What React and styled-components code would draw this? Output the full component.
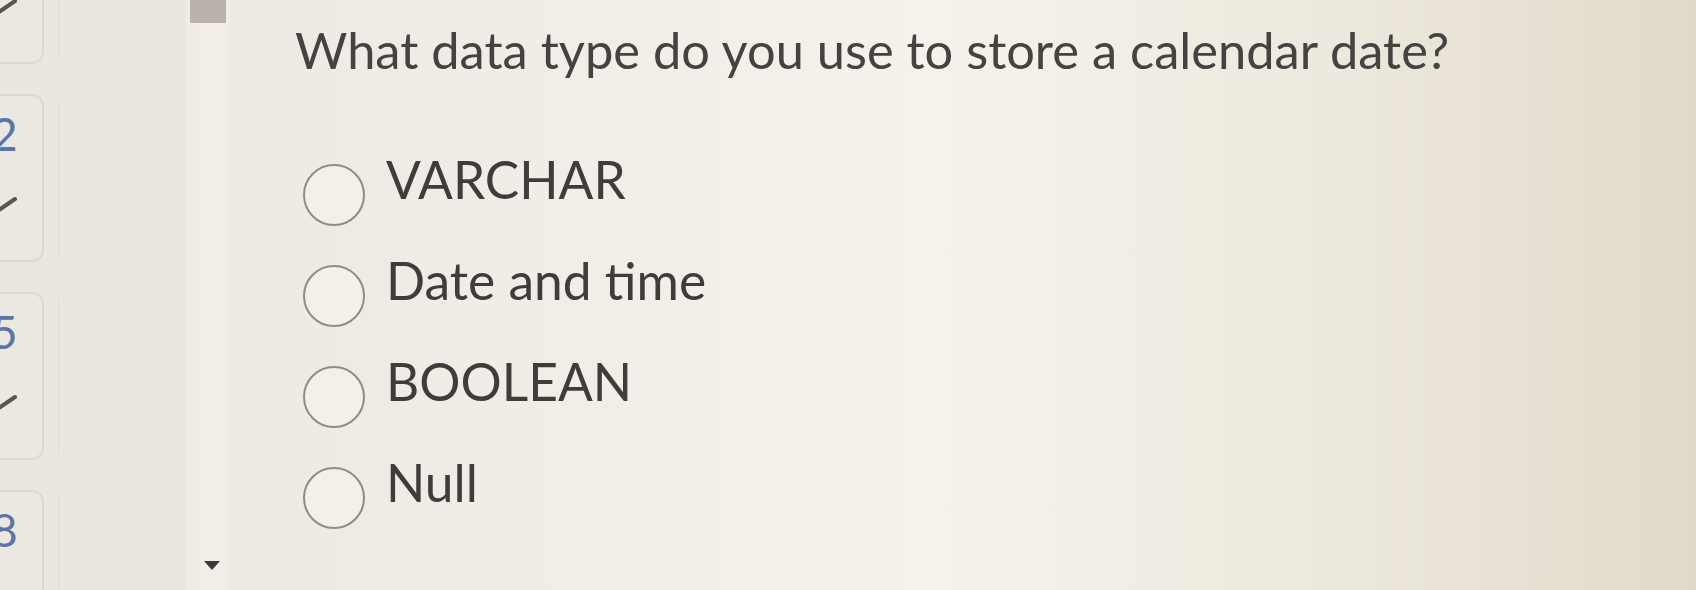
import React from "react"
import styled, { createGlobalStyle } from "styled-components"

const GlobalStyle = createGlobalStyle`
  html, body {
    margin: 0;
    padding: 0;
    height: 100%;
    overflow: hidden;
  }
  body {
    font-family: Lato, "Liberation Sans", sans-serif;
    background: #efebe4;
  }
`

const questions = [
  { id: 1, num: "1" },
  { id: 2, num: "2" },
  { id: 3, num: "5" },
  { id: 4, num: "8" },
]

const answers = ["VARCHAR", "Date and time", "BOOLEAN", "Null"]

const Check = () => (
  <svg width="20" height="20" viewBox="0 0 20 20">
    <path d="M-4 19 L15 6" stroke="#595552" strokeWidth="4" strokeLinecap="round" fill="none" />
  </svg>
)

export default function App() {
  return (
    <>
      <GlobalStyle />
      <Page>
        <Sidebar>
          {questions.map((q) => (
            <Card key={q.id}>
              <Num $hidden={q.id === 1}>{q.num}</Num>
              <Mark>
                <Check />
              </Mark>
            </Card>
          ))}
        </Sidebar>
        <Track>
          <Thumb />
          <Arrow />
        </Track>
        <Main>
          <Question>What data type do you use to store a calendar date?</Question>
          <Options>
            {answers.map((a) => (
              <Option key={a}>
                <Radio />
                <Label>{a}</Label>
              </Option>
            ))}
          </Options>
        </Main>
      </Page>
    </>
  )
}

const Page = styled.div`
  display: grid;
  grid-template-columns: 186px 44px 1fr;
  grid-template-rows: 590px;
  height: 590px;
  overflow: hidden;
  background: linear-gradient(
    90deg,
    #ebe8e1 0%,
    #f1ede6 30%,
    #f6f2eb 55%,
    #eee9de 78%,
    #e0dacb 100%
  );
`

const Sidebar = styled.div`
  display: flex;
  flex-direction: column;
  gap: 30px;
  overflow: hidden;
  background: #eae7e0;

  & > :first-child {
    margin-top: -104px;
  }
`

const Card = styled.div`
  position: relative;
  width: 44px;
  height: 168px;
  flex-shrink: 0;
  box-sizing: border-box;
  border: 2px solid #dcd8d0;
  border-left: none;
  border-radius: 0 12px 12px 0;
  background: #ebe8e1;

  &::after {
    content: "";
    position: absolute;
    top: 4px;
    bottom: 4px;
    right: -17px;
    width: 1px;
    background: #e0ddd6;
  }
`

const Num = styled.div`
  visibility: ${(p) => (p.$hidden ? "hidden" : "visible")};
  margin-top: 15px;
  margin-left: -9px;
  font-size: 46px;
  line-height: 46px;
  color: #5d74a8;
`

const Mark = styled.div`
  margin-top: 36px;
  height: 20px;
`

const Track = styled.div`
  display: flex;
  flex-direction: column;
  align-items: center;
  justify-content: space-between;
  background: linear-gradient(90deg, #f0ebe5 0%, #f4eee8 50%, #f1ece5 100%);
  padding-bottom: 20px;
`

const Thumb = styled.div`
  width: 36px;
  height: 23px;
  background: #b9b2ad;
`

const Arrow = styled.div`
  width: 0;
  height: 0;
  border-left: 8px solid transparent;
  border-right: 8px solid transparent;
  border-top: 9px solid #3e3a3a;
  margin-left: 8px;
`

const Main = styled.div`
  padding-top: 20px;
  padding-left: 65px;
  color: #454341;
`

const Question = styled.h1`
  margin: 0;
  font-family: Lato, "Liberation Sans", sans-serif;
  font-weight: 400;
  font-size: 50.6px;
  line-height: 60px;
  white-space: nowrap;
`

const Options = styled.div`
  display: flex;
  flex-direction: column;
  gap: 39px;
  margin-top: 84px;
  padding-left: 8px;
`

const Option = styled.label`
  display: flex;
  align-items: flex-start;
  gap: 21px;
  height: 62px;
`

const Radio = styled.span`
  width: 62px;
  height: 62px;
  box-sizing: border-box;
  border: 2.5px solid #8f8b88;
  border-radius: 50%;
  background: #f3f0ea;
  flex-shrink: 0;
`

const Label = styled.span`
  font-family: Lato, "Liberation Sans", sans-serif;
  font-size: 51.5px;
  line-height: 1;
  color: #3f3d3c;
  margin-top: -10px;
  white-space: nowrap;
`
